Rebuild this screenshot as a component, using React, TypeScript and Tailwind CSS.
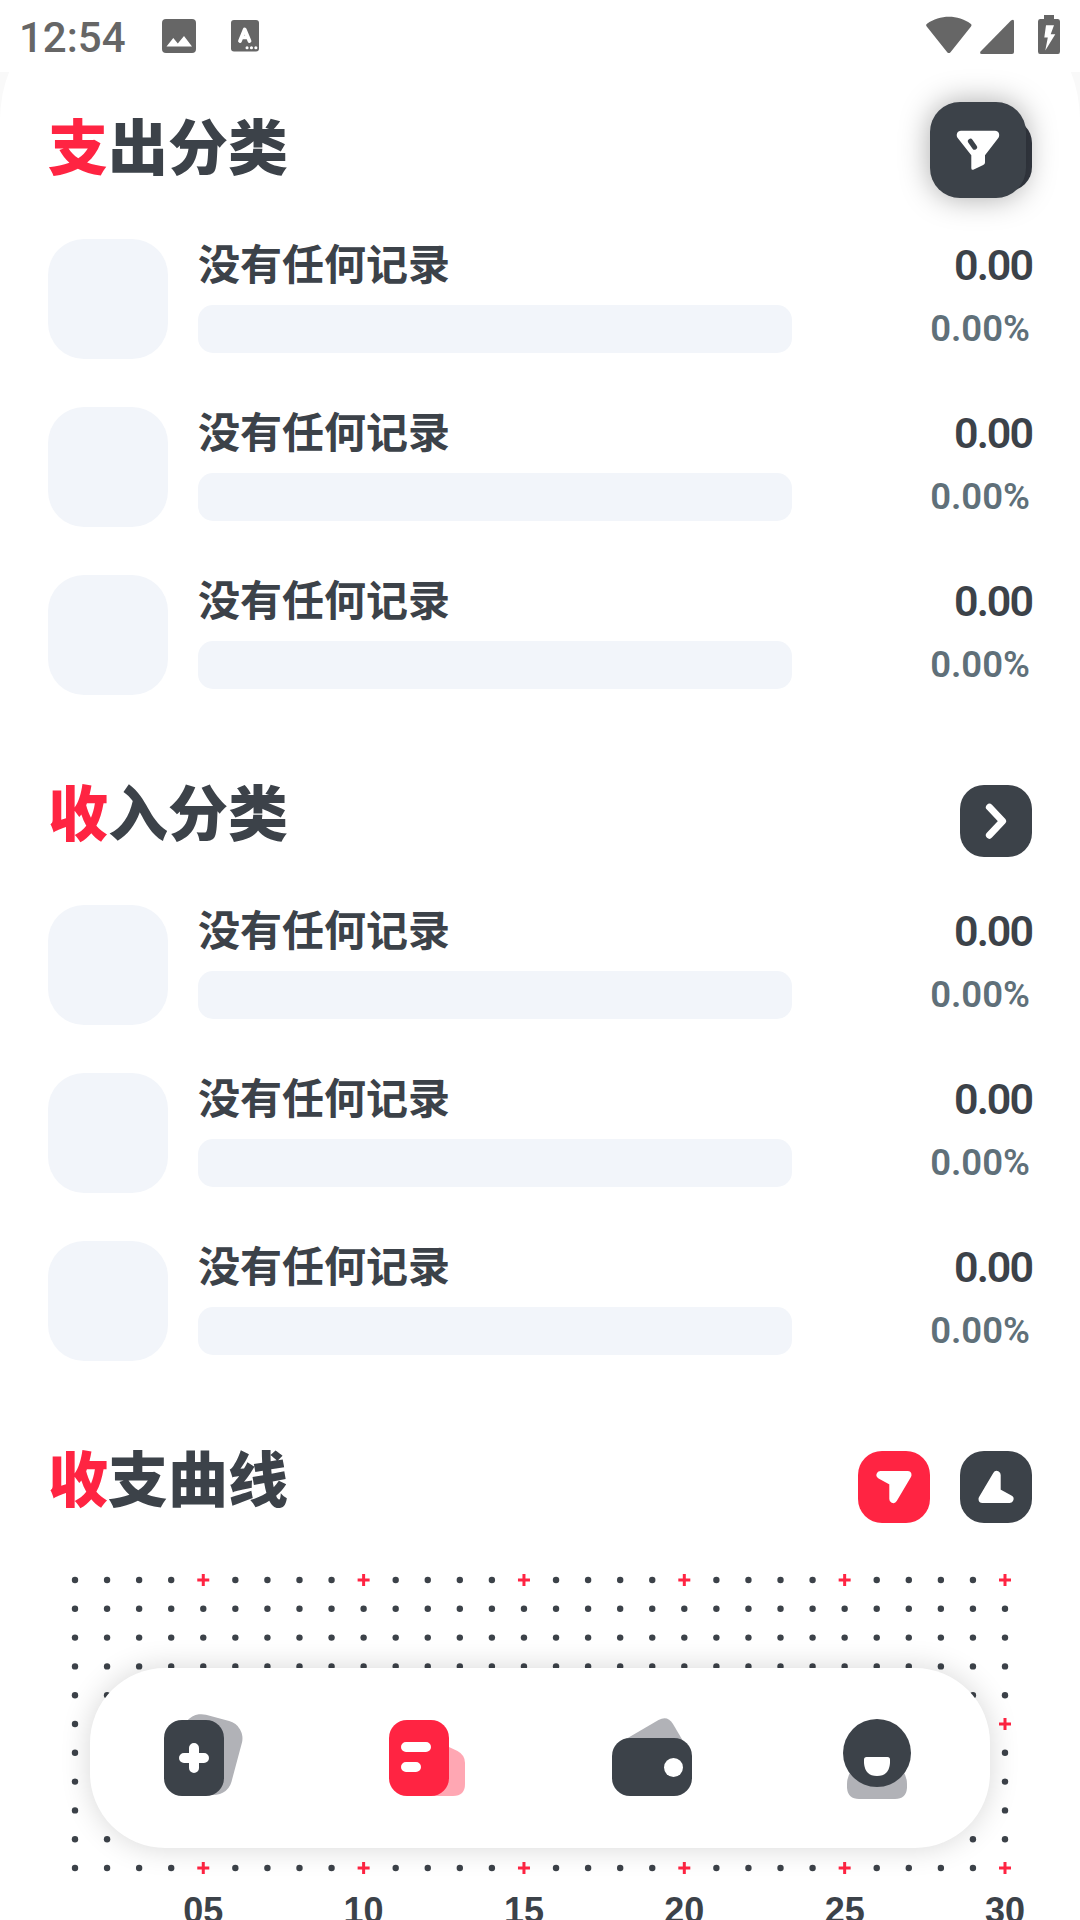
import type { ReactNode } from 'react';

interface SectionProps {
  title: string;
  actions: ReactNode;
  children: ReactNode;
}

const EMPTY_ROWS = [0, 1, 2];
const DAYS = Array.from({ length: 30 }, (_, i) => i + 1);
const LINES = Array.from({ length: 11 }, (_, i) => i);

// position of a day / line inside the chart
const dayX = (day: number) => 27 + ((day - 1) * 930) / 29;
const lineY = (line: number) => 57 + line * 28.8;

function StatusBar() {
  return (
    <header className="relative flex h-[72px] items-start justify-between bg-white text-[#666666]">
      <div className="flex items-start">
        <span className="ml-[19px] mt-[13px] w-[143px] font-['Roboto',sans-serif] text-[42px] font-medium leading-[50px]">12:54</span>
        <svg className="mt-[19px] h-[35px] w-[35px]" viewBox="0 0 35 35" fill="none">
          <rect width="34" height="34" rx="4" fill="currentColor" />
          <path d="M4.5 27.5L11.3 19L15.8 24.5L22 17L30 27.5Z" fill="white" />
        </svg>
        <svg className="ml-[34px] mt-[20px] h-[32px] w-[28px]" viewBox="0 0 28 32" fill="none">
          <rect width="28" height="31.5" rx="3" fill="currentColor" />
          <path d="M9 21L13.7 9.5L18.5 21M11 17.3H16.5" stroke="white" strokeWidth="3.8" strokeLinecap="round" strokeLinejoin="round" />
          <path d="M16 27.7h.1M20.4 27.7h.1M24.8 27.7h.1" stroke="white" strokeWidth="3" strokeLinecap="round" />
        </svg>
      </div>
      <div className="mr-[20px] mt-[15px] flex">
        <svg className="h-[40px] w-[46px]" viewBox="0 0 46 40" fill="currentColor">
          <path d="M.7 11.4Q-.6 9.8 1 8.7C14-.5 32-.5 44.6 8.7Q46.3 9.8 45 11.4L24.5 37.2Q22.8 39 21.2 37.2Z" />
        </svg>
        <svg className="ml-[8px] h-[40px] w-[35px]" viewBox="0 0 35 40" fill="currentColor">
          <path d="M31 5.6Q34 3.4 34 6.5V37Q34 39 32 39H1.8Q-1 39 .8 36.2Z" />
        </svg>
        <svg className="ml-[23px] h-[40px] w-[22px]" viewBox="0 0 22 40" fill="none">
          <path d="M6 0H16V4H20Q22 4 22 6.5V36.5Q22 39 20 39H2Q0 39 0 36.5V6.5Q0 4 2 4H6Z" fill="currentColor" />
          <path d="M8 10.3H16L12.7 19.3H17.3L7.3 35.6L9.8 22.4H6.3Z" fill="white" />
        </svg>
      </div>
    </header>
  );
}

function Section({ title, actions, children }: SectionProps) {
  return (
    <section className="mb-[90px]">
      <div className="flex h-[72px] items-start justify-between">
        <h2 className="text-[60px] font-black leading-[50px] text-[#3c4249]">
          <span className="text-[#ff2442]">{title.slice(0, 1)}</span>
          {title.slice(1)}
        </h2>
        <div className="flex gap-[30px]">{actions}</div>
      </div>
      {children}
    </section>
  );
}

function EmptyList() {
  return (
    <div className="mt-12 flex flex-col gap-12">
      {EMPTY_ROWS.map((row) => (
        <div key={row} className="flex h-[120px]">
          <div className="w-[120px] rounded-[36px] bg-[#f2f5fa]" />
          <div className="ml-[30px] w-[594px]">
            <p className="h-[66px] text-[42px] font-bold leading-[46px] text-[#3c4249]">没有任何记录</p>
            <div className="h-12 rounded-[15px] bg-[#f2f5fa]" />
          </div>
          <div className="flex-1 text-right font-['Roboto',sans-serif] font-semibold">
            <p className="h-[63px] text-[43px] leading-[53px] tracking-[-2px] text-[#3c4249]">0.00</p>
            <p className="pr-[2px] text-[36.5px] leading-[53px] text-[#607079]">0.00%</p>
          </div>
        </div>
      ))}
    </div>
  );
}

function FilterButton() {
  return (
    <button className="relative h-[72px] w-[72px] rounded-[24px] bg-[#363b44]">
      <span className="absolute -left-[30px] -top-[17px] h-24 w-24 rounded-[30px] bg-[#3c4249] shadow-[0_0_30px_rgba(0,0,0,0.34)]">
        <svg className="h-24 w-24" viewBox="0 0 96 96" fill="none">
          <path
            d="M31 28.7H65C69 28.7 70.3 33 68.3 36L55 53.3V60.5Q55 62.3 53.2 63L43.8 67.6Q41.3 68.5 41.3 66V53.3L27.7 36C25.7 33 27 28.7 31 28.7Z"
            fill="white"
          />
          <path d="M40.4 39.2L44.6 45.2" stroke="#3c4249" strokeWidth="5" strokeLinecap="round" />
        </svg>
      </span>
    </button>
  );
}

function MoreButton() {
  return (
    <button className="h-[72px] w-[72px] rounded-[24px] bg-[#3c4249]">
      <svg viewBox="0 0 72 72" fill="none" stroke="white" strokeWidth="7" strokeLinecap="round" strokeLinejoin="round">
        <path d="M29.4 22.2L42.6 36.2L29.4 50.2" />
      </svg>
    </button>
  );
}

function CurveToggle() {
  const arrow = 'M22.5 24H49.5L35.3 48V31Z';

  return (
    <>
      <button className="h-[72px] w-[72px] rounded-[24px] bg-[#ff2442]">
        <svg viewBox="0 0 72 72" fill="white" stroke="white" strokeWidth="8" strokeLinejoin="round">
          <path d={arrow} />
        </svg>
      </button>
      <button className="h-[72px] w-[72px] rounded-[24px] bg-[#3c4249]">
        <svg className="rotate-180" viewBox="0 0 72 72" fill="white" stroke="white" strokeWidth="8" strokeLinejoin="round">
          <path d={arrow} />
        </svg>
      </button>
    </>
  );
}

function CurveChart() {
  return (
    <svg className="h-[397px] w-[984px] overflow-visible" viewBox="0 0 984 397">
      {LINES.map((line) =>
        DAYS.map((day) => {
          const x = dayX(day);
          const y = lineY(line);
          if (day % 5 === 0 && line % 5 === 0) {
            return <path key={`${line}-${day}`} d={`M${x - 6} ${y}h12M${x} ${y - 6}v12`} stroke="#ff2442" strokeWidth="3" />;
          }
          return <circle key={`${line}-${day}`} cx={x} cy={y} r="3.2" fill="#3c4249" />;
        })
      )}
      {DAYS.filter((day) => day % 5 === 0).map((day) => (
        <text
          key={day}
          x={dayX(day)}
          y="400"
          textAnchor="middle"
          fill="#3c4249"
          className="font-['Liberation_Sans',sans-serif] text-[36px] font-bold"
        >
          {String(day).padStart(2, '0')}
        </text>
      ))}
    </svg>
  );
}

function TabBar() {
  return (
    <nav className="absolute left-[90px] top-[1668px] flex h-[180px] w-[900px] rounded-[75px] bg-white shadow-[0_0_30px_rgba(0,0,0,0.16)]">
      {/* Add */}
      <button className="w-[225px]">
        <svg viewBox="0 0 225 180" fill="none">
          <rect x="87.7" y="48.6" width="60" height="76" rx="18" fill="#b1b2b7" transform="rotate(15 117.7 86.6)" />
          <rect x="74" y="52" width="60" height="76" rx="18" fill="#3c4249" />
          <path d="M104 80V100M94 90H114" stroke="white" strokeWidth="10" strokeLinecap="round" />
        </svg>
      </button>
      {/* Stats */}
      <button className="w-[225px]">
        <svg viewBox="0 0 225 180" fill="none">
          <path d="M134 79L142.5 83Q150 87 150 95V116Q150 128 138 128H112Z" fill="#ffa7b3" />
          <rect x="74" y="52" width="60" height="76" rx="18" fill="#ff2442" />
          <path d="M91 79H111M91 99H101" stroke="white" strokeWidth="10" strokeLinecap="round" />
        </svg>
      </button>
      {/* Wallet */}
      <button className="w-[225px]">
        <svg viewBox="0 0 225 180" fill="none">
          <path d="M86 71L118.5 52Q127.5 47 133 56L143 73V80H86Z" fill="#b1b2b7" />
          <rect x="72" y="70" width="80" height="58" rx="18" fill="#3c4249" />
          <circle cx="133.5" cy="99.5" r="9.5" fill="white" />
        </svg>
      </button>
      {/* Profile */}
      <button className="w-[225px]">
        <svg viewBox="0 0 225 180" fill="none">
          <path d="M86 103Q82 109 82 116V120Q83 131 94 131H130Q141 131 142 120V116Q142 109 138 103Z" fill="#b1b2b7" />
          <circle cx="112" cy="85" r="34" fill="#3c4249" />
          <path d="M101.5 89H122.5Q125 89 125 91.5V95Q124 108 112 108Q100 108 99 95V91.5Q99 89 101.5 89Z" fill="white" />
        </svg>
      </button>
    </nav>
  );
}

export default function App() {
  return (
    <div className="relative h-[1920px] w-[1080px] overflow-hidden bg-[#f9f9f9] font-['Noto_Sans_CJK_SC',sans-serif]">
      <div className="absolute inset-x-0 -bottom-[200px] -top-[12px] rounded-[132px] bg-white" />
      <StatusBar />
      <main className="relative px-12 pt-[47px]">
        <Section title="支出分类" actions={<FilterButton />}>
          <EmptyList />
        </Section>
        <Section title="收入分类" actions={<MoreButton />}>
          <EmptyList />
        </Section>
        <Section title="收支曲线" actions={<CurveToggle />}>
          <CurveChart />
        </Section>
      </main>
      <TabBar />
    </div>
  );
}
